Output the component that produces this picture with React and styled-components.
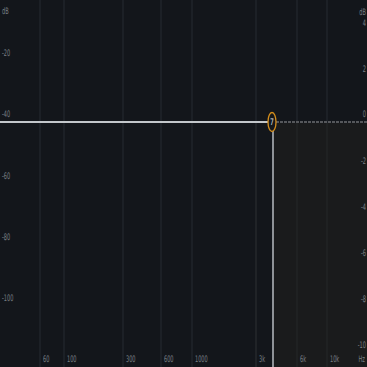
import React from 'react';
import styled, {createGlobalStyle} from 'styled-components';

const GlobalStyle = createGlobalStyle`
    html, body {
        margin: 0;
        padding: 0;
        background: #13161b;
    }
`

const Panel = styled.div`
    width: 367px;
    height: 367px;
    background: #13161b;
    overflow: hidden;
`

const Graph = styled.svg`
    display: block;
    width: 367px;
    height: 367px;
    font-family: "DejaVu Sans Condensed", "Liberation Sans", sans-serif;
    font-size: 9px;

    .grid {
        stroke: #20252b;
        stroke-width: 1.5;
    }
    .label {
        fill: #7a8086;
    }
    .node-text {
        fill: #e8e8e8;
        font-size: 9px;
    }
`

const freqs = [
    {x: 40, label: "60"},
    {x: 64, label: "100"},
    {x: 123, label: "300"},
    {x: 161, label: "600"},
    {x: 192, label: "1000"},
    {x: 256, label: "3k"},
    {x: 297, label: "6k"},
    {x: 327, label: "10k"},
];

const leftDb = [
    {y: 14, label: "dB"},
    {y: 56, label: "-20"},
    {y: 117, label: "-40"},
    {y: 179, label: "-60"},
    {y: 240, label: "-80"},
    {y: 301, label: "-100"},
];

const rightDb = [
    {y: 15, label: "dB"},
    {y: 26, label: "4"},
    {y: 72, label: "2"},
    {y: 117, label: "0"},
    {y: 164, label: "-2"},
    {y: 210, label: "-4"},
    {y: 256, label: "-6"},
    {y: 302, label: "-8"},
    {y: 348, label: "-10"},
];

const nodeX = 272;
const nodeY = 122;

// narrow axis labels, squeezed horizontally like the plugin's font
const Label = ({x, y, anchor = "start", children}) => (
    <text className="label" transform={`translate(${x} ${y}) scale(0.62 1)`} textAnchor={anchor}>
        {children}
    </text>
);

const App = () => {
    return (
        <Panel>
            <GlobalStyle/>
            <Graph viewBox="0 0 367 367">
                {freqs.map(f => (
                    <line key={f.x} className="grid" x1={f.x} y1={0} x2={f.x} y2={367}/>
                ))}

                <rect x={274} y={123} width={93} height={244} fill="#1c1c1d" opacity="0.9"/>
                <line x1={256} y1={123} x2={256} y2={367} stroke="#222428" strokeWidth="1.5"/>
                <line x1={297} y1={123} x2={297} y2={367} stroke="#222324" strokeWidth="1.5"/>
                <line x1={327} y1={123} x2={327} y2={367} stroke="#222324" strokeWidth="1.5"/>

                <line x1={0} y1={nodeY} x2={nodeX - 4} y2={nodeY} stroke="#c3c7cb" strokeWidth="2"/>
                <line x1={nodeX + 4} y1={nodeY} x2={367} y2={nodeY} stroke="#55575b" strokeWidth="2"
                      strokeDasharray="3 1"/>
                <line x1={273} y1={nodeY + 9} x2={273} y2={367} stroke="#b9bdc2" strokeWidth="1.5"/>

                <ellipse cx={nodeX} cy={nodeY} rx={4} ry={9.5} fill="#15181c" stroke="#d68f1c" strokeWidth="1.3"/>
                <text className="node-text" transform={`translate(${nodeX} ${nodeY + 3}) scale(0.75 1)`}
                      textAnchor="middle">7</text>

                {freqs.map(f => (
                    <Label key={f.label} x={f.x + 3} y={362}>{f.label}</Label>
                ))}
                <Label x={365} y={362} anchor="end">Hz</Label>

                {leftDb.map(d => (
                    <Label key={d.label} x={2} y={d.y}>{d.label}</Label>
                ))}
                {rightDb.map(d => (
                    <Label key={d.label} x={366} y={d.y} anchor="end">{d.label}</Label>
                ))}
            </Graph>
        </Panel>
    );
}

export default App;
